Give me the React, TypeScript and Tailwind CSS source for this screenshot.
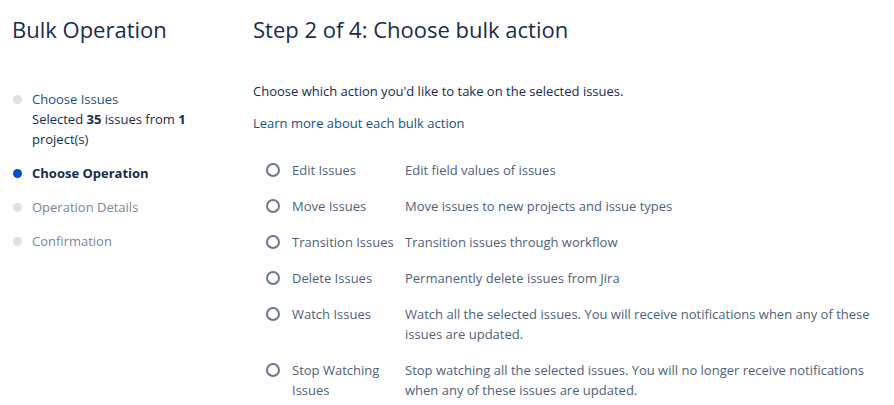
const steps = [
  { label: "Choose Issues", state: "done" },
  { label: "Choose Operation", state: "current" },
  { label: "Operation Details", state: "todo" },
  { label: "Confirmation", state: "todo" },
];

const operations = [
  { name: "Edit Issues", desc: "Edit field values of issues" },
  { name: "Move Issues", desc: "Move issues to new projects and issue types" },
  { name: "Transition Issues", desc: "Transition issues through workflow" },
  { name: "Delete Issues", desc: "Permanently delete issues from Jira" },
  {
    name: "Watch Issues",
    desc: "Watch all the selected issues. You will receive notifications when any of these issues are updated.",
  },
  {
    name: "Stop Watching Issues",
    desc: "Stop watching all the selected issues. You will no longer receive notifications when any of these issues are updated.",
  },
];

export default function App() {
  return (
    <div
      className="flex w-[894px] h-[405px] bg-white text-[#172b4d] overflow-hidden"
      style={{ fontFamily: '"Open Sans", "Noto Sans", sans-serif' }}
    >
      {/* Sidebar */}
      <aside className="w-[253px] shrink-0 pl-3 pt-[14px]">
        <h1 className="text-[22px] leading-[30px] font-normal">Bulk Operation</h1>
        <ul className="mt-[45px] text-[13px] leading-5">
          {steps.map((s) => (
            <li key={s.label} className="flex items-start mb-[14px]">
              <span className="w-5 shrink-0 pt-[6px] pl-[1px]">
                <span
                  className={
                    s.state === "current"
                      ? "block w-[9px] h-[9px] rounded-full bg-[#0052cc]"
                      : "block w-[9px] h-[9px] rounded-full bg-[#dfe1e6]"
                  }
                />
              </span>
              <div>
                {s.state === "done" && (
                  <>
                    <a className="text-[#205081]">{s.label}</a>
                    <div className="text-[#172b4d] w-[170px]">
                      Selected <b>35</b> issues from <b>1</b> project(s)
                    </div>
                  </>
                )}
                {s.state === "current" && <span className="font-bold text-[#172b4d]">{s.label}</span>}
                {s.state === "todo" && <span className="text-[#7a869a]">{s.label}</span>}
              </div>
            </li>
          ))}
        </ul>
      </aside>

      {/* Main */}
      <main className="flex-1 pt-[14px]">
        <h2 className="text-[22px] leading-[30px] font-normal">Step 2 of 4: Choose bulk action</h2>
        <p className="mt-[37px] text-[13px] leading-5">Choose which action you'd like to take on the selected issues.</p>
        <a className="block mt-3 text-[13px] leading-5 text-[#205081]">Learn more about each bulk action</a>
        <div className="mt-[27px] pl-[13px] text-[13px] leading-5 text-[#505f79]">
          {operations.map((op) => (
            <div key={op.name} className="flex items-start mb-4">
              <span className="w-[26px] shrink-0 pt-[3px]">
                <span className="block w-[14px] h-[14px] rounded-full border-2 border-[#6b778c]" />
              </span>
              <span className="w-[113px] shrink-0 pr-2">{op.name}</span>
              <span className="w-[470px]">{op.desc}</span>
            </div>
          ))}
        </div>
      </main>
    </div>
  );
}
